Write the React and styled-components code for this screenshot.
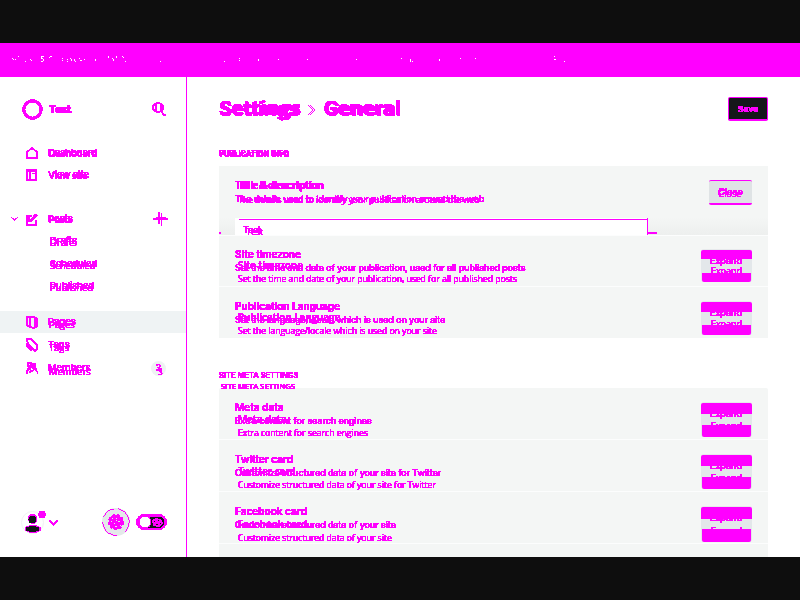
import React from 'react';
import styled, { createGlobalStyle } from 'styled-components';

const M = '#ff00ff';

const Global = createGlobalStyle`
  * { box-sizing: border-box; }
  body { margin: 0; background: #0e0e0e; font-family: Inter, sans-serif; overflow: hidden; }
  svg { display: block; }
`;

const Screen = styled.div`
  width: 800px; height: 600px; display: flex; flex-direction: column;
  background: #0e0e0e; padding: 43px 0; overflow: hidden;
`;
const Banner = styled.div`height: 34px; flex: none; background: ${M};`;
const Columns = styled.div`flex: 1; min-height: 0; display: flex; background: #fff; overflow: hidden;`;
const Sidebar = styled.aside`
  width: 187px; flex: none; border-right: 1px solid ${M};
  display: flex; flex-direction: column;
`;
const Main = styled.main`width: 613px; padding: 20px 32px 0; overflow: hidden;`;

/* Two renderings of one string, the second shifted and set in another face */
const Mark = styled.span`
  position: relative; display: block; width: max-content; white-space: pre; color: ${M};
  font-size: ${p => p.$size}px; font-weight: ${p => p.$weight || 400};
  line-height: ${p => p.$line || 14}px; height: ${p => p.$line || 14}px;
  letter-spacing: ${p => p.$track || 0}px;
  filter: url(#crisp);
`;
const Shifted = styled.span`
  position: absolute; left: ${p => p.$dx}px; top: ${p => p.$dy}px;
  font-family: "Open Sans", sans-serif; font-size: ${p => p.$size}px; letter-spacing: 0;
`;
function Double({ children, size, size2, dx = 1, dy = 1, ...r }) {
  return (
    <Mark $size={size} $weight={r.weight} $line={r.line} $track={r.track}>
      {children}
      <Shifted $dx={dx} $dy={dy} $size={size2 || size} aria-hidden="true">{children}</Shifted>
    </Mark>
  );
}

const Brand = styled.div`
  display: flex; align-items: center; height: 24px; margin: 20px 20px 0 22px;
  & > :nth-child(2) { margin-left: 6px; }
  & > :last-child { margin-left: auto; }
`;
const Nav = styled.nav`display: flex; flex-direction: column; padding-top: ${p => p.$top}px;`;
const NavRow = styled.div`
  display: flex; align-items: center; flex: none; height: ${p => p.$h || 22}px;
  padding: 0 18px 0 ${p => p.$left || 26}px; gap: 10px;
  background: ${p => (p.$active ? '#eff3f4' : 'transparent')};
`;
const Icon = styled.svg`flex: none; width: ${p => p.$w || 12}px; height: ${p => p.$h || 14}px; fill: none; stroke: ${M}; stroke-width: ${p => p.$stroke || 2}; shape-rendering: crispEdges; overflow: visible;`;
const Chevron = styled(Icon)`margin-right: -2px;`;
const End = styled.span`margin-left: auto; display: flex;`;
const Badge = styled.span`
  margin: 0 2px 0 auto; width: 15px; height: 15px; border-radius: 50%; background: #eff2f3;
  display: flex; align-items: center; justify-content: center;
`;
const Footer = styled.div`
  margin-top: auto; height: 70px; padding: 0 19px 0 21px; display: flex; align-items: center;
`;
const Gear = styled.div`
  width: 28px; height: 28px; margin-left: auto; border-radius: 50%; background: #e4e8ea;
  display: flex; align-items: center; justify-content: center;
`;
const Toggle = styled.div`margin-left: 6px;`;

const Header = styled.header`display: flex; justify-content: space-between; align-items: center; height: 24px;`;
const Heading = styled.h1`margin: 0; display: flex; align-items: center;
  & > svg { margin: 2px 8px 0 7px; }`;
const Save = styled.button`
  width: 40px; height: 24px; padding: 0; border: 1px solid ${M}; border-bottom-width: 2px; border-radius: 2px;
  background: #15171a; display: flex; justify-content: center; align-items: center;
`;
const Label = styled.div`height: 12px; margin-top: ${p => p.$top}px;`;
const Panel = styled.section`background: #f4f6f5; margin-top: ${p => p.$top}px; border-radius: 2px 2px 0 0;`;
const Open = styled.div`
  height: 70px; padding: 13px 16px 0; border-bottom: 1px solid #fcfdfd; overflow: hidden; position: relative;
  background: linear-gradient(#f4f6f5 75%, #edefee);
`;
const Top = styled.div`display: flex; justify-content: space-between; height: 39px;`;
const Close = styled.div`
  width: 43px; height: 25px; margin-top: 1px; border-radius: 2px; background: #dfe3e5;
  border-top: 1px solid ${M}; border-bottom: 2px solid ${M};
  display: flex; align-items: center; justify-content: center;
`;
const InputLine = styled.div`display: flex; align-items: flex-start;`;
const Input = styled.div`
  width: 413px; height: 17px; background: #fff; border-right: 1px solid ${M};
  background-image: linear-gradient(${M}, ${M}); background-size: 408px 1px; background-position: 4px 1px; background-repeat: no-repeat;
  padding: 6px 0 0 8px;
`;
const Stub = styled.i`width: 9px; height: 2px; margin-top: 14px; background: ${M};`;
const Tick = styled.i`position: absolute; left: 0; bottom: 1px; width: 2px; height: 2px; background: ${M};`;
const Row = styled.div`
  display: flex; justify-content: space-between; height: ${p => (p.$last ? 51 : p.$short ? 51 : 52)}px;
  padding: ${p => (p.$short ? 11 : 12)}px 16px 0; border-bottom: ${p => (p.$last ? 0 : 1)}px solid #fcfdfd;
`;
const Expand = styled.div`
  width: 51px; height: ${p => p.$h + 1}px; margin-top: 2px; padding: 0; position: relative;
  border-top: 1px solid #e6e9eb; border-radius: 3px; background: #e3e7ea;
  display: flex; flex-direction: column; justify-content: space-between;
`;
const Band = styled.i`
  display: block; height: ${p => p.$h}px; background: ${M};
  margin: 0 ${p => (p.$low ? 1 : 0)}px;
  border-radius: ${p => (p.$low ? '0 0 2px 2px' : '2px 2px 0 0')};
`;
const Over = styled.div`position: absolute; left: 9px; top: ${p => p.$y}px;`;

function ExpandButton({ h, top, low, dy, y }) {
  return (
    <Expand $h={h}>
      <Band $h={top} />
      <Over $y={y}><Double size={8.95} size2={8.9} weight={500} line={12} dx={1} dy={dy}>Expand</Double></Over>
      <Band $h={low} $low />
    </Expand>
  );
}

function Setting({ title, text, dy, btn, short, last }) {
  return (
    <Row $short={short} $last={last}>
      <div>
        <Double size={10.05} size2={9.9} weight={600} track={0.01} dx={3} dy={dy - 0.5}>{title}</Double>
        <Double size={8.83} size2={8.62} weight={450} track={-0.02} dx={3} dy={dy - 0.5}>{text}</Double>
      </div>
      <ExpandButton {...btn} />
    </Row>
  );
}

const home = <Icon viewBox="0 0 12 14"><path d="M1 6v6h10V6L6 2 1 6z" /></Icon>;
const site = <Icon viewBox="0 0 12 14"><path d="M1 2h9v10H1zM0 3h11M4 4v8" /><path d="M6 5.5h5M10.5 4v9" strokeWidth="1" /></Icon>;
const posts = <Icon viewBox="0 0 12 14"><path d="M6 4H1v9h9V8M5 8l5-6M4 10l7-7M3 4v6" /></Icon>;
const pages = <Icon viewBox="0 0 12 14"><path d="M1 2h7l3 2v7l-3 2-4-1-3-2zM4 3v8M9 4v7" /></Icon>;
const tags = <Icon viewBox="0 0 12 14"><path d="M1 1h4l6 6v4l-2 2-7-7zM1 5v3l5 5" /></Icon>;
const members = <Icon viewBox="0 0 12 14"><path d="M2 2h3v3H2zM7 3h2v3H7zM1 8l3-2 3 1 4 1" strokeWidth="1.8" /><path d="M1 13v-3l3-2 2 3M6 10l3-2 2.5 3v2M3 12l2-2" strokeWidth="1.5" /></Icon>;

const specks = [[12,58],[13,59],[15,59],[18,56],[25,61],[30,59],[31,60],[41,56],[42,56],[43,56],[41,57],[41,58],[42,58],[43,59],[43,60],[42,61],[41,61],[49,57],[50,56],[51,56],[62,58],[62,60],[67,59],[67,61],[70,58],[71,59],[71,60],[74,59],[74,60],[75,61],[79,58],[80,60],[81,60],[84,59],[95,59],[95,60],[108,56],[108,57],[112,58],[113,59],[113,60],[116,56],[116,57],[122,56],[123,57],[125,61],[160,61],[224,61],[239,58],[239,60],[258,59],[258,60],[278,59],[307,59],[356,59],[401,58],[410,59],[410,60],[410,61],[412,61],[439,59],[439,60],[460,58],[475,58],[554,56],[554,59],[555,59],[564,61]];

const nav = { size: 9.5, size2: 9.4, weight: 500, track: -0.05 };

export default function App() {
  return (
    <Screen>
      <Global />
      <svg width="0" height="0" aria-hidden="true">
        <filter id="crisp" x="-5%" y="-50%" width="115%" height="250%" colorInterpolationFilters="sRGB">
          <feComponentTransfer><feFuncA type="linear" slope="60" intercept="-1.8" /></feComponentTransfer>
        </filter>
      </svg>
      <Banner>
        <svg width="800" height="34" shapeRendering="crispEdges" fill="#fff">
          {specks.map(([x, y], i) => <rect key={i} x={x} y={y - 43} width="1" height="1" />)}
        </svg>
      </Banner>
      <Columns>
        <Sidebar>
          <Brand>
            <svg width="21" height="21" shapeRendering="crispEdges"><circle cx="10.5" cy="10.5" r="8.7" fill="none" stroke={M} strokeWidth="3.4" /></svg>
            <Double size={10.2} weight={700} dx={1} dy={0}>Test</Double>
            <Icon $w={14} $h={14} viewBox="0 0 14 14"><ellipse cx="6" cy="5.5" rx="5" ry="4.5" /><path d="M4 2v7M9 3v6M9 9l3 4h2" /></Icon>
          </Brand>
          <Nav $top={20}>
            <NavRow $h={23}>{home}<Double {...nav} dx={1} dy={1}>Dashboard</Double></NavRow>
            <NavRow>{site}<Double {...nav} size={9.6} dx={1}>View site</Double></NavRow>
            <NavRow $h={21} />
            <NavRow $h={23} $left={11}>
              <Chevron $w={7} $h={4} $stroke={1} viewBox="0 0 7 4"><path d="M0 0l3.5 3L7 0" /></Chevron>
              {posts}<Double {...nav} dx={1}>Posts</Double>
              <End><Icon $w={15} $h={14} viewBox="0 0 15 14"><path d="M6 0v12M0 7h15M3 6h10" /><path d="M8.5 1v13" strokeWidth="1" /></Icon></End>
            </NavRow>
            <NavRow $left={50}><Double {...nav} dx={0} dy={2}>Drafts</Double></NavRow>
            <NavRow $h={23} $left={50}><Double {...nav} size={9.35} dx={0} dy={2}>Scheduled</Double></NavRow>
            <NavRow $left={50}><Double {...nav} dx={0} dy={2}>Published</Double></NavRow>
            <NavRow $h={14} />
            <NavRow $active>{pages}<Double {...nav} dx={1} dy={3}>Pages</Double></NavRow>
            <NavRow $h={24}>{tags}<Double {...nav} dx={1} dy={3}>Tags</Double></NavRow>
            <NavRow>{members}<Double {...nav} dx={1} dy={3.5}>Members</Double>
              <Badge><Double size={8.5} weight={500} dx={2} dy={4} line={12}>3</Double></Badge></NavRow>
          </Nav>
          <Footer>
            <svg width="38" height="28">
              <circle cx="11.5" cy="14.5" r="11" fill="#fff" stroke="#f1f2f3" />
              <g shapeRendering="crispEdges">
                <path d="M7 8l2-2h5l2 3v5l-3 2h-3l-3-3z" fill={M} /><circle cx="11.5" cy="11.5" r="4" fill="#15171a" />
                <ellipse cx="12" cy="21" rx="8.5" ry="4" fill={M} /><ellipse cx="11.5" cy="21" rx="7.2" ry="3" fill="#15171a" />
                <circle cx="21" cy="6.5" r="3.8" fill={M} />
                <path d="M28.5 12.5l4 4 4-4" fill="none" stroke={M} strokeWidth="1.7" />
              </g>
            </svg>
            <Gear>
              <svg width="28" height="28" shapeRendering="crispEdges">
                <circle cx="14" cy="14" r="13.3" fill="none" stroke={M} strokeDasharray="28 9 22 5 14 4" transform="rotate(-75 14 14)" />
                <circle cx="14" cy="14" r="7.2" fill={M} /><circle cx="14" cy="14" r="7.6" fill="none" stroke={M} strokeDasharray="3 2.2" />
                <path d="M10 10.5h1M14 10.5h1M9 13.5h1M16 13.5h2M12 15.5h1M13 18.5h2M14 12.5h1M18 17.5h1" stroke="#e4e8ea" strokeWidth="1" />
              </svg>
            </Gear>
            <Toggle>
              <svg width="31" height="16" shapeRendering="crispEdges">
                <rect width="31" height="16" rx="8" fill={M} /><path d="M7 2.5h15c4 0 6 2 6 5.5s-2 6-6 6H12z" fill="#15171a" />
                <circle cx="9" cy="8" r="6.5" fill={M} /><circle cx="9" cy="8" r="5.3" fill="#fff" />
                <path d="M16 6l4-2 6 2 1 4-4 3-6-1z" fill={M} /><path d="M18 7.5h1M22 6.5h1M20 10.5h2M24 9.5h1" stroke="#15171a" />
              </svg>
            </Toggle>
          </Footer>
        </Sidebar>
        <Main>
          <Header>
            <Heading>
              <Double size={20.2} size2={20.1} weight={700} line={26} dx={1} dy={-1}>Settings</Double>
              <Icon $w={9} $h={12} viewBox="0 0 9 12"><path d="M1 1l5 5-5 5M3 1l5 5-5 5" strokeWidth="1" /></Icon>
              <Double size={20.2} size2={19.7} weight={700} line={26} dx={-1} dy={-1}>General</Double>
            </Heading>
            <Save><Double size={8.8} size2={8.8} weight={600} line={12} dx={1} dy={0}>Save</Double></Save>
          </Header>
          <Label $top={27}><Double size={7.5} size2={7.5} weight={600} line={12} dx={1} dy={0}>PUBLICATION INFO</Double></Label>
          <Panel $top={6}>
            <Open>
              <Top>
                <div>
                  <Double size={10.1} size2={9.8} weight={600} line={13} dx={3} dy={0}>Title & description</Double>
                  <Double size={8.8} size2={8.65} line={13} dx={3} dy={2}>The details used to identify your publication around the web</Double>
                </div>
                <Close><Double size={8.95} size2={9.3} weight={500} line={12} dx={0} dy={2}>Close</Double></Close>
              </Top>
              <InputLine>
                <Input><Double size={8.9} size2={8.9} line={12} dx={3} dy={2}>Test</Double></Input>
                <Stub />
              </InputLine>
              <Tick />
            </Open>
            <Setting short title="Site timezone" text="Set the time and date of your publication, used for all published posts" dy={11}
              btn={{ h: 32, top: 9, low: 9, y: 5, dy: 10 }} />
            <Setting last title="Publication Language" text="Set the language/locale which is used on your site" dy={11.5}
              btn={{ h: 33, top: 10, low: 10, y: 5, dy: 11 }} />
          </Panel>
          <Label $top={32}><Double size={7.5} size2={7.55} weight={600} line={12} track={0.02} dx={2} dy={10}>SITE META SETTINGS</Double></Label>
          <Panel $top={6}>
            <Setting title="Meta data" text="Extra content for search engines" dy={12.5} btn={{ h: 34, top: 11, low: 12, y: 5, dy: 12 }} />
            <Setting title="Twitter card" text="Customize structured data of your site for Twitter" dy={12.5} btn={{ h: 34, top: 11, low: 12, y: 5, dy: 12 }} />
            <Setting title="Facebook card" text="Customize structured data of your site" dy={13.5} btn={{ h: 35, top: 12, low: 13, y: 5, dy: 13 }} />
            <Row />
          </Panel>
        </Main>
      </Columns>
    </Screen>
  );
}
